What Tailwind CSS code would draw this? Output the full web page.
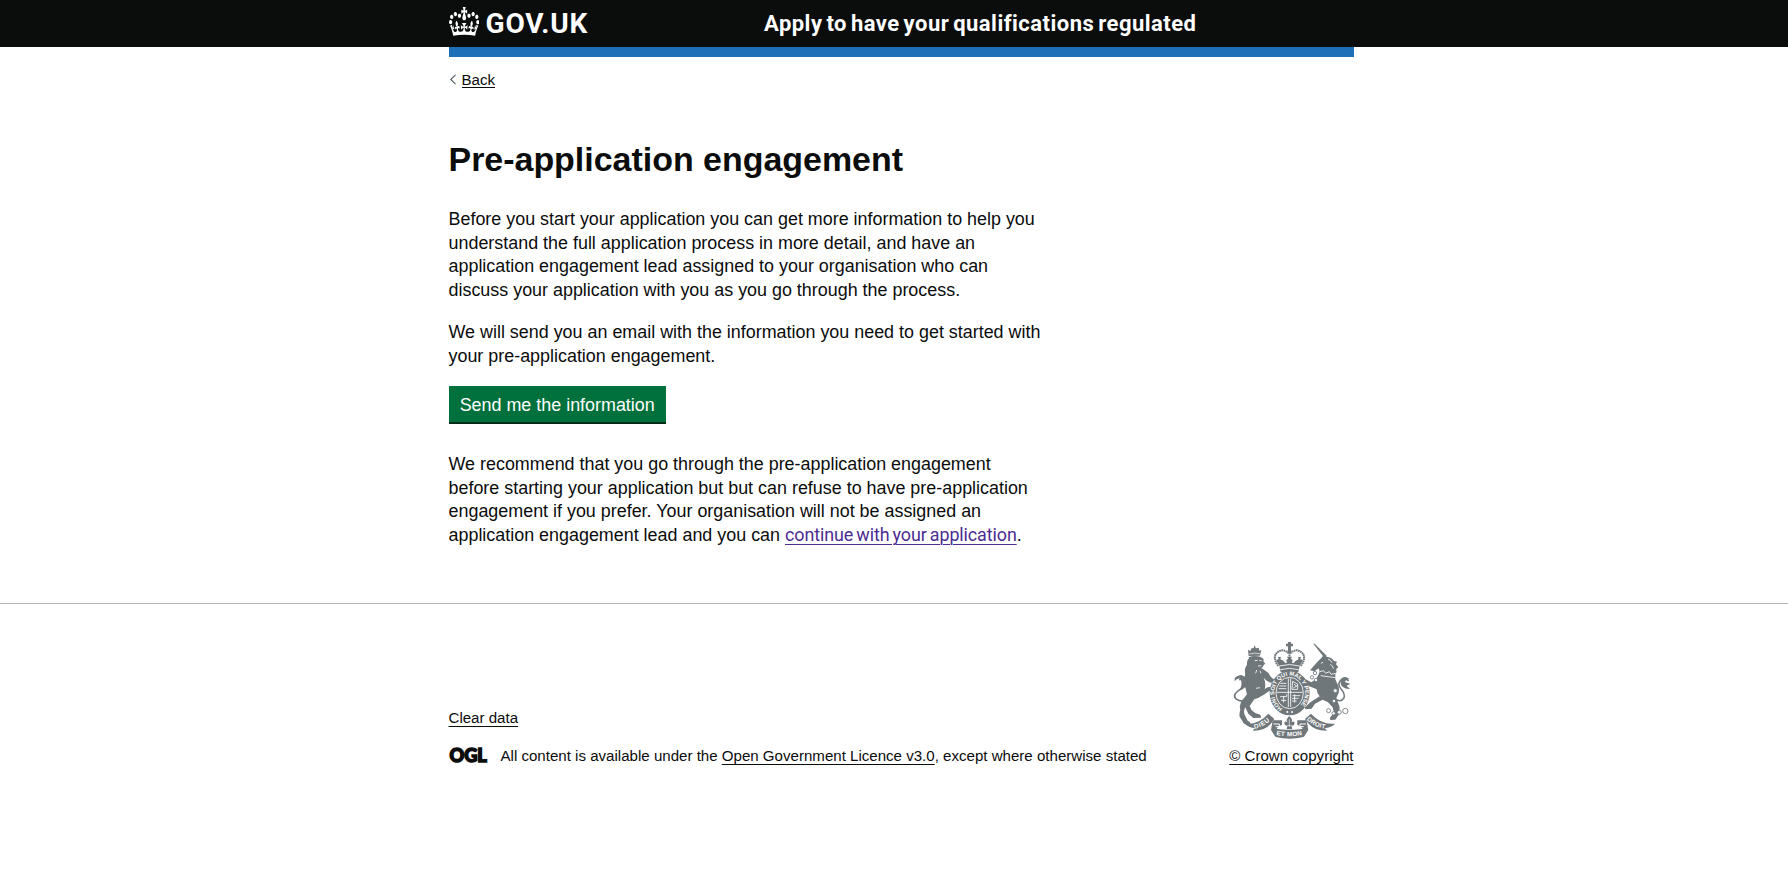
<!DOCTYPE html>
<html lang="en">
<head>
<meta charset="utf-8">
<title>Pre-application engagement</title>
<script src="https://cdn.jsdelivr.net/npm/@tailwindcss/browser@4"></script>
</head>
<body class="min-h-screen overflow-hidden bg-white font-['Liberation_Sans',Arial,sans-serif] text-[#0b0c0c]">
<header class="h-[47px] bg-[#0b0c0c] pl-[448.5px] text-white">
  <div class="flex h-full w-[905px] items-center">
    <a class="flex w-[315.5px] items-center" href="#">
      <svg class="-mt-[5px] mr-[6.5px] h-[29px] w-[30.5px] shrink-0 fill-white" viewBox="0 0 132 97" preserveAspectRatio="none"><path d="M25 30.2c3.5 1.5 7.7-.2 9.1-3.7 1.5-3.6-.2-7.8-3.9-9.2-3.6-1.4-7.6.3-9.1 3.9-1.4 3.5.3 7.5 3.9 9zM9 39.5c3.6 1.5 7.8-.2 9.2-3.7 1.5-3.6-.2-7.8-3.9-9.1-3.6-1.5-7.6.2-9.1 3.8-1.4 3.5.3 7.5 3.8 9zM4.4 57.2c3.5 1.5 7.7-.2 9.1-3.8 1.5-3.6-.2-7.7-3.9-9.1-3.5-1.5-7.6.3-9.1 3.8-1.4 3.5.3 7.6 3.9 9.1zm38.3-21.4c3.5 1.5 7.7-.2 9.1-3.8 1.5-3.6-.2-7.7-3.9-9.1-3.6-1.5-7.6.3-9.1 3.8-1.3 3.6.4 7.7 3.9 9.1zm64.4-5.6c-3.6 1.5-7.8-.2-9.1-3.7-1.5-3.6.2-7.8 3.8-9.2 3.6-1.4 7.7.3 9.2 3.9 1.3 3.5-.4 7.5-3.9 9zm15.9 9.3c-3.6 1.5-7.7-.2-9.1-3.7-1.5-3.6.2-7.8 3.7-9.1 3.6-1.5 7.7.2 9.2 3.8 1.5 3.5-.3 7.5-3.8 9zm4.7 17.7c-3.6 1.5-7.8-.2-9.2-3.8-1.5-3.6.2-7.7 3.9-9.1 3.6-1.5 7.7.3 9.2 3.8 1.3 3.5-.4 7.6-3.9 9.1zM89.3 35.8c-3.6 1.5-7.8-.2-9.2-3.8-1.4-3.6.2-7.7 3.9-9.1 3.6-1.5 7.7.3 9.2 3.8 1.4 3.6-.3 7.7-3.9 9.1zM69.7 17.7l8.9 4.7V9.3l-8.9 2.8c-.2-.3-.5-.6-.9-.9L72.4 0H59.6l3.5 11.2c-.3.3-.6.5-.9.9l-8.8-2.8v13.1l8.8-4.7c.3.3.6.7.9.9l-5 15.4v.1c-.2.8-.4 1.6-.4 2.4 0 4.1 3.1 7.5 7 8.1h.2c.3 0 .7.1 1 .1.4 0 .7 0 1-.1h.2c4-.6 7.1-4.1 7.1-8.1 0-.8-.1-1.7-.4-2.4V34l-5.1-15.4c.4-.2.7-.6 1-.9zM66 92.8c16.9 0 32.8 1.1 47.1 3.2 4-16.9 8.9-26.7 14-33.5l-9.6-3.4c1 4.9 1.1 7.2 0 10.2-1.5-1.4-3-4.3-4.2-8.7L108.6 76c2.8-2 5-3.2 7.5-3.3-4.4 9.4-10 11.9-13.6 11.2-4.3-.8-6.3-4.6-5.6-7.9 1-4.7 5.7-5.9 8-.5 4.3-8.7-3-11.4-7.6-8.8 7.1-7.2 7.9-13.5 2.1-21.1-8 6.1-8.1 12.3-4.5 20.8-4.7-5.4-12.1-2.5-9.5 6.2 3.4-5.2 7.9-2 7.2 3.1-.6 4.3-6.4 7.8-13.5 7.2-10.3-.9-10.9-8-11.2-13.8 2.5-.5 7.1 1.8 11 7.3L80.2 60c-4.1 4.4-8 5.3-12.3 5.4 1.4-4.4 8-11.6 8-11.6H55.5s6.4 7.2 7.9 11.6c-4.2-.1-8-1-12.3-5.4l1.4 16.4c3.9-5.5 8.5-7.7 10.9-7.3-.3 5.8-.9 12.8-11.1 13.8-7.2.6-12.9-2.9-13.5-7.2-.7-5 3.8-8.3 7.1-3.1 2.7-8.7-4.6-11.6-9.4-6.2 3.7-8.5 3.6-14.7-4.6-20.8-5.8 7.6-5 13.9 2.2 21.1-4.7-2.6-11.9.1-7.7 8.8 2.3-5.5 7.1-4.2 8.1.5.7 3.3-1.3 7.1-5.7 7.9-3.5.7-9-1.8-13.5-11.2 2.5.1 4.7 1.3 7.5 3.3l-4.7-15.4c-1.2 4.4-2.7 7.2-4.3 8.7-1.1-3-.9-5.3 0-10.2l-9.5 3.4c5 6.9 9.9 16.7 14 33.5 14.8-2.1 30.8-3.2 47.7-3.2z"/></svg>
      <span class="font-['Roboto',sans-serif] text-[28px] font-bold leading-none tracking-[0.8px]">GOV.UK</span>
    </a>
    <a class="whitespace-nowrap font-['Roboto',sans-serif] text-[22px] font-bold tracking-[0.48px] [word-spacing:-2px]" href="#">Apply to have your qualifications regulated</a>
  </div>
</header>
<div class="pl-[448.5px]">
  <div class="h-[9.5px] w-[905px] bg-[#1d70b8]"></div>
  <a class="mt-[13px] flex h-[19px] w-fit items-center text-[15.08px] leading-[19px]" href="#">
    <svg class="mr-[5px] h-[11px] w-[8px] fill-none stroke-[#505a5f] stroke-[1.1]" viewBox="0 0 8 11"><path d="M6.5 .8 1.8 5.5l4.7 4.7"/></svg>
    <span class="h-[18px] border-b border-[#0b0c0c]">Back</span>
  </a>
  <main class="w-[595px] pt-[51px] text-[17.92px] leading-[23.57px]">
    <h1 class="text-[33.95px] font-bold leading-[38px]">Pre-application engagement</h1>
    <p class="mt-[30.7px]">Before you start your application you can get more information to help you<br>understand the full application process in more detail, and have an<br>application engagement lead assigned to your organisation who can<br>discuss your application with you as you go through the process.</p>
    <p class="mt-[18.9px]">We will send you an email with the information you need to get started with<br>your pre-application engagement.</p>
    <button class="mt-[18px] block h-[37.5px] w-[217.4px] border-b-2 border-[#002d18] bg-[#00703c] pt-[2px] text-center leading-[35px] text-white">Send me the information</button>
    <p class="mt-[29.4px]">We recommend that you go through the pre-application engagement<br>before starting your application but but can refuse to have pre-application<br>engagement if you prefer. Your organisation will not be assigned an<br>application engagement lead and you can <a class="whitespace-nowrap font-['Roboto',sans-serif] leading-none tracking-[-0.1px] text-[#4c2c92] underline decoration-1 underline-offset-[3px] [word-spacing:-1.2px]" href="#">continue with your application</a>.</p>
  </main>
</div>
<footer class="mt-[55.4px] border-t border-[#b1b4b6] pl-[448.5px] pt-[36px] text-[15.08px] leading-[19px]">
  <div class="flex w-[905px] items-end justify-between">
    <div>
      <a class="mb-[19px] block w-fit underline decoration-1 underline-offset-[3px]" href="#">Clear data</a>
      <div class="flex items-center">
        <svg class="mr-[13px] h-[17px] w-[39px] shrink-0 overflow-visible fill-[#0b0c0c] stroke-[#0b0c0c] stroke-[1.5]" viewBox="0 0 39 17"><text x="0.4" y="15" font-family="Lato" font-weight="900" font-size="18" textLength="37.5" lengthAdjust="spacingAndGlyphs">OGL</text></svg>
        <span class="whitespace-nowrap">All content is available under the <a class="underline decoration-1 underline-offset-[3px]" href="#">Open Government Licence v3.0</a>, except where otherwise stated</span>
      </div>
    </div>
    <div class="flex flex-col items-center">
      <svg class="mb-[6px] h-[100px] w-[119.3px]" viewBox="38 30 358 300" fill="#6f777b" stroke="none">
        <!-- lion -->
        <path d="M88 78l-2-19 7 4 4-9 6 1 2-9 5 9 8-2 2 9 6-2-4 17z"/>
        <path d="M90 72q16-5 32-1" fill="none" stroke="#fff" stroke-width="2"/>
        <path d="M87 82q16-7 36-2l10 7-1 7 6 7-5 4q-1 9-8 8l10 7q13 7 17 17l6 7 9 6q-4 10-14 8l-13-7-7-8q8 16 3 34 9-7 18-7l6 9-11 5-17 11q-13 9-27 13l-14 20 6 13 12 9 14 4 3 9-24 1-15-13-9-19q-7 11-2 22l9 18q10 4 8 12l-19-3-13-21q-2-10 2-21-5-14 6-29 9-10 14-17l-5-20q-8-9-2-18l-3-11q6-7 4-16-2-14 6-24-1-15 7-20z"/>
        <path d="M106 92l9-1M120 91l7 1M116 108l10-1M112 120l-3 10M122 122l3 8M110 175l12-2" fill="none" stroke="#fff" stroke-width="2.500"/>
        <path d="M72 214q-29-4-26-19 4-9 20-19 22-15 14-27-9-8-20 1" fill="none" stroke="#6f777b" stroke-width="5"/>
        <path d="M66 135q23 9 17 26-6 16-24 21 12-16 5-36-11-3-18 8-4-17 20-19z"/>
        <!-- unicorn -->
        <path d="M282 41l4 0 36 36-7 6z"/>
        <path d="M292 98l16-16 7-11 7 9q15 1 22 13l9 2-3 8 7 8-6 6q3 10-3 16v15l6 13q8 12 4 28l-7 15 10 27-1 21-12 17-15 1-1-7 12-15-4-16-14-15-16-8-23 12-10 15-19 2-1-6 16-15 28-18q-9-11-9-21l-22-9-20-14-9-10 5-9 13 12 17 9 14-10 7-12q6-10 2-20l-14 9-13-3z"/>
        <path d="M305 100l6-3M301 125l12-3 6 8 11-5 5 8 14-3M304 137l44 6M326 87q10 4 12 11M333 103q9 5 9 13" fill="none" stroke="#fff" stroke-width="2.500"/>
        <path d="M347 206q16 14 27-2 4-13-9-27-13-17 1-28 12-8 22 4" fill="none" stroke="#6f777b" stroke-width="4.500"/>
        <path d="M369 143q-12 15 1 27 8 8 22 7l-10-10 11-6-17-5q4-8 14-9-10-9-21-4z"/>
        <g fill="#fff" stroke="#6f777b" stroke-width="2.500"><circle cx="278" cy="142" r="5"/><circle cx="290" cy="150" r="5"/><circle cx="287" cy="129" r="5"/><circle cx="348" cy="182" r="6"/><circle cx="344" cy="213" r="5"/><circle cx="328" cy="242" r="6"/><circle cx="343" cy="250" r="5"/><circle cx="360" cy="247" r="6"/><circle cx="378" cy="243" r="8"/></g>
        <!-- royal crown -->
        <path d="M206 49h-6v-8h6v-5h9v5h6v8h-6v11h-9z"/><circle cx="210.500" cy="63" r="6"/>
        <g fill="none" stroke="#6f777b" stroke-width="6" stroke-dasharray="5 1.500"><path d="M208 70q-15-15-31-5-21 14 0 43"/><path d="M213 70q15-15 31-5 21 14 0 43"/><path d="M210.500 68v22"/></g>
        <path d="M180 108l-10-18 8-2-2-7h9l-2 7 9 4 5 6 6 1-2-9 5-4-3-6h15l-3 6 5 4-2 9 6-1 5-6 9-4-2-7h9l-2 7 8 2-10 18-4 18h-53z"/>
        <path d="M180 108q30-9 61 0M183 119q27-8 55 0" fill="none" stroke="#fff" stroke-width="2.500"/>
        <!-- garter and shield -->
        <ellipse cx="211" cy="189" rx="60" ry="67"/>
        <ellipse cx="211" cy="189" rx="41" ry="47" fill="#6f777b" stroke="#fff" stroke-width="2.500"/>
        <path id="garter" d="M190 235A46 52 0 1 1 232 235" fill="none"/>
        <text fill="#fff" font-family="Liberation Sans" font-weight="700" font-size="17"><textPath href="#garter" textLength="248" lengthAdjust="spacingAndGlyphs">HONI SOIT QUI MAL Y PENSE</textPath></text>
        <g fill="none" stroke="#fff" stroke-width="2.500"><path d="M172 187h78M207 145v86M214 145v86M183 160h18M180 168h21M178 176h23M182 200h20v-7M185 211h16M193 218v-20M220 154l15 8v16h-17zM224 162l8 7M222 174l14-8M219 197h24M218 205h20M218 213h14M226 193v25"/></g>
        <circle cx="204" cy="246" r="3" fill="#fff"/><circle cx="218" cy="246" r="3" fill="#fff"/>
        <!-- fleur and motto ribbon -->
        <path d="M210 258q13 12 6 19 10-6 10 3 0 6-9 8l2 10h-17l2-10q-9-2-9-8 0-9 10-3-8-7 5-19z"/>
        <path d="M210 268v22M203 287h15" stroke="#fff" stroke-width="2"/>
        <path d="M76 281q40 5 71-30l18 16-11 15q-18 21-54 20l7-8q-19-1-31-13z"/><path d="M348 281q-42 4-73-30l-18 16 12 15q18 21 54 20l-7-8q20-1 32-13z"/>
        <path d="M160 271h28v14q-10 1-15 10l-5 25-13-20zM262 271h-28v14q10 1 15 10l5 25 13-20z"/>
        <path d="M162 282h18v8h-11M260 282h-18v8h11" fill="none" stroke="#fff" stroke-width="3"/>
        <path d="M160 295q51 10 102 0l-9 26q-42 11-84 0z"/>
        <path id="dieu" d="M106 297Q134 290 156 268" fill="none"/><path id="droit" d="M262 269Q286 293 322 297" fill="none"/><path id="mon" d="M171 315Q211 323 251 315" fill="none"/>
        <g fill="#fff" font-family="Liberation Sans" font-weight="700" font-size="19"><text><textPath href="#dieu" textLength="52">DIEU</textPath></text><text><textPath href="#droit" textLength="62">DROIT</textPath></text><text><textPath href="#mon" textLength="78">ET MON</textPath></text></g>
      </svg>
      <a class="underline decoration-1 underline-offset-[3px]" href="#">© Crown copyright</a>
    </div>
  </div>
</footer>
</body>
</html>
